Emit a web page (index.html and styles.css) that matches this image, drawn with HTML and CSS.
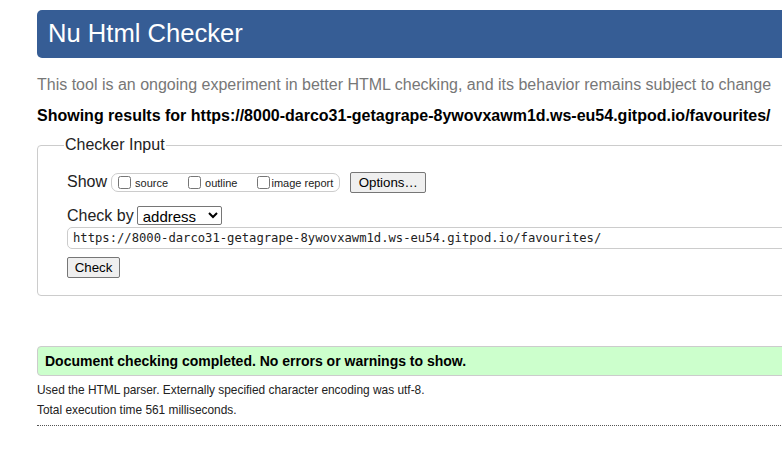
FILE: index.html
```html
<!DOCTYPE html>
<html>
<head>
<meta charset="utf-8">
<link rel="stylesheet" href="styles.css">
</head>
<body>
<div class="page">
  <header class="banner"><h1>Nu Html Checker</h1></header>
  <p class="tagline">This tool is an ongoing experiment in better HTML checking, and its behavior remains subject to change</p>
  <p class="results-for">Showing results for https://8000-darco31-getagrape-8ywovxawm1d.ws-eu54.gitpod.io/favourites/</p>
  <fieldset class="input-box">
    <legend>Checker Input</legend>
    <div class="row show-row">
      <span class="lbl">Show</span>
      <span class="opts">
        <label><input type="checkbox"><span>source</span></label>
        <label><input type="checkbox"><span>outline</span></label>
        <label><input type="checkbox"><span>image report</span></label>
      </span>
      <button class="btn">Options…</button>
    </div>
    <div class="row by-row">
      <span class="lbl">Check by</span>
      <select class="sel"><option>address</option></select>
    </div>
    <div class="url">https://8000-darco31-getagrape-8ywovxawm1d.ws-eu54.gitpod.io/favourites/</div>
    <button class="btn check">Check</button>
  </fieldset>
  <div class="success">Document checking completed. No errors or warnings to show.</div>
  <p class="info first">Used the HTML parser. Externally specified character encoding was utf-8.</p>
  <p class="info">Total execution time 561 milliseconds.</p>
  <div class="rule"></div>
</div>
</body>
</html>
```
FILE: styles.css
```css
html { overflow: hidden; }
body {
  margin: 0;
  font-family: "Liberation Sans", Arial, sans-serif;
  color: #000;
  background: #fff;
}
.page {
  width: 860px;
  margin-left: 37px;
  padding-top: 10px;
}
.banner {
  background: #365d95;
  border-radius: 5px;
  height: 48px;
  display: flex;
  align-items: center;
  padding-left: 11px;
}
.banner h1 {
  margin: 0;
  color: #fff;
  font-weight: normal;
  font-size: 25.6px;
  line-height: 1;
  padding-bottom: 1px;
}
.tagline {
  margin: 17px 0 0;
  color: #777;
  font-size: 16px;
  line-height: 20px;
}
.results-for {
  margin: 11px 0 0;
  font-weight: bold;
  font-size: 16px;
  line-height: 20px;
}
.input-box {
  margin: 10px 0 0;
  border: 1px solid #ccc;
  border-radius: 4px;
  padding: 17px 0 17px 29px;
  width: 800px;
}
.input-box legend {
  margin-left: -3px;
  padding: 0 1px;
  font-size: 16px;
  color: #222;
}
.row { display: flex; align-items: center; }
.lbl { font-size: 16px; color: #222; }
.show-row { height: 22px; }
.opts {
  margin-left: 4px;
  display: flex;
  align-items: center;
  border: 1px solid #ccc;
  border-radius: 7px;
  height: 17px;
  padding: 0 6px 0 2px;
  font-size: 11px;
  color: #222;
}
.opts label { display: flex; align-items: center; margin-right: 16px; }
.opts label:last-child { margin-right: 0; }
.opts label span { padding-top: 2px; }
.opts input {
  margin: 0 4px 0 4px;
  width: 13px;
  height: 13px;
}
.opts label:last-child input { margin-right: 1px; }
.btn {
  font-family: "Liberation Sans", Arial, sans-serif;
  font-size: 13.3px;
  background: #efefef;
  border: 1px solid #767676;
  border-radius: 2px;
  padding: 1px 6px;
  height: 21px;
  color: #000;
}
.show-row .btn { margin-left: 10px; width: 76px; }
.by-row { margin-top: 13px; height: 19px; }
.sel {
  margin-left: 3px;
  font-family: "Liberation Sans", Arial, sans-serif;
  font-size: 15px;
  width: 85px;
  height: 19px;
  border: 1px solid #767676;
  border-radius: 2px;
  padding: 0 1px;
  background: #fff;
  color: #000;
}
.url {
  margin-top: 2px;
  border: 1px solid #ccc;
  border-radius: 5px;
  height: 20px;
  line-height: 20px;
  padding-left: 5px;
  font-family: "DejaVu Sans Mono", "Liberation Mono", monospace;
  font-size: 12.2px;
  color: #222;
}
.check {
  margin-top: 8px;
  width: 53px;
  height: 21px;
  display: block;
}
.success {
  margin-top: 50px;
  background: #ccffcc;
  border: 1px solid #ccc;
  border-radius: 4px;
  height: 28px;
  line-height: 28px;
  padding-left: 7px;
  font-weight: bold;
  font-size: 14px;
}
.info {
  margin: 6px 0 0;
  font-size: 11.9px;
  line-height: 14px;
  color: #222;
}
.info.first { margin-top: 7px; }
.rule {
  margin-top: 8px;
  width: 744px;
  border-top: 1px dotted #555;
}
```
